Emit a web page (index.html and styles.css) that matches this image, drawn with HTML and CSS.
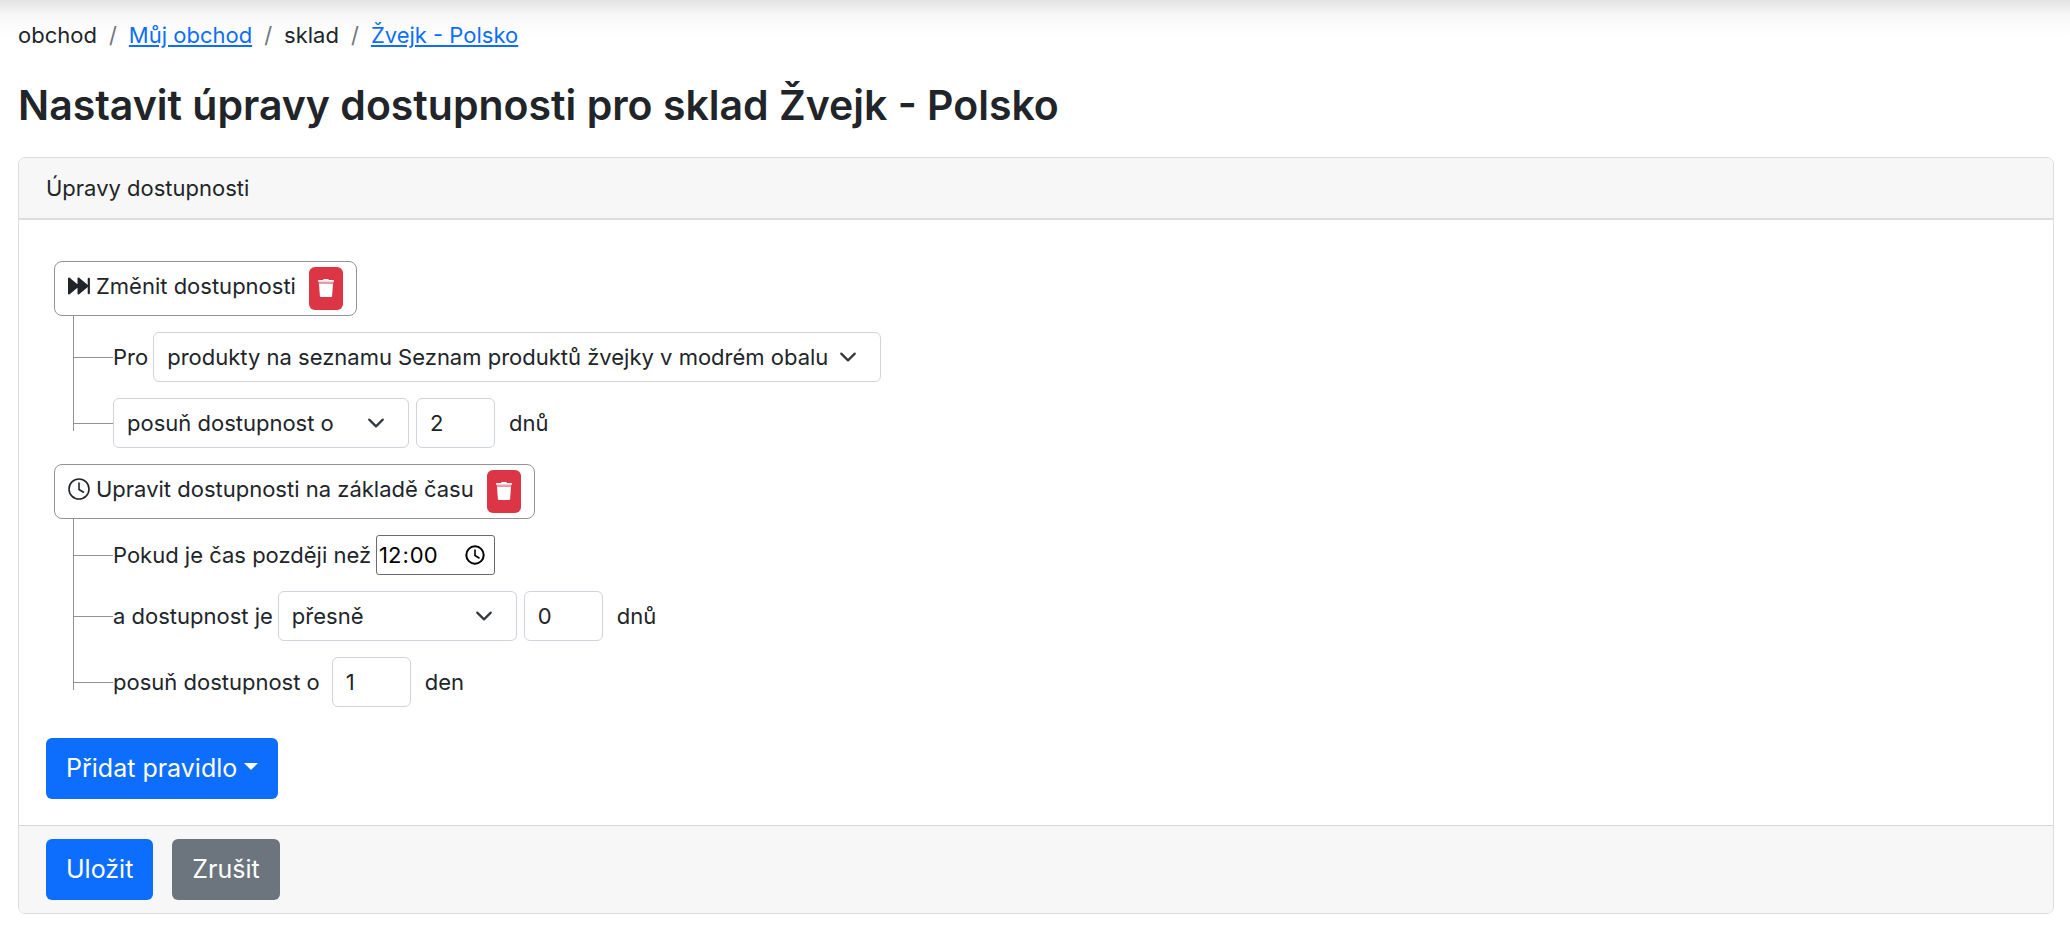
FILE: index.html
```html
<!DOCTYPE html>
<html lang="cs">
<head>
  <meta charset="utf-8">
  <meta name="viewport" content="width=device-width, initial-scale=1">
  <title>Nastavit úpravy dostupnosti</title>
  <link rel="stylesheet" href="styles.css">
</head>
<body>
  <main class="page">
    <nav>
      <ol class="breadcrumb">
        <li>obchod</li>
        <li><a href="#">Můj obchod</a></li>
        <li>sklad</li>
        <li><a href="#">Žvejk - Polsko</a></li>
      </ol>
    </nav>

    <h1>Nastavit úpravy dostupnosti pro sklad Žvejk - Polsko</h1>

    <form class="card">
      <div class="card-header">Úpravy dostupnosti</div>

      <div class="card-body">
        <div class="rules">
          <section class="rule">
            <div class="rule-title">
              <svg class="icon" viewBox="0 0 22 22" fill="currentColor" stroke="currentColor" stroke-linejoin="round">
                <path d="M1 3.500v15l9-7.500zM10.500 3.500v15l9-7.500z" stroke-width="2"/>
                <path d="M20.800 3.800v14.400" stroke-width="2.200" stroke-linecap="round"/>
              </svg>
              <span>Změnit dostupnosti</span>
              <button type="button" class="btn-delete" aria-label="Smazat">
                <svg viewBox="0 0 16 18" fill="#fff">
                  <path d="M0 2.700V1.700Q0 1 .8 1H5Q5.300 0 6.200 0h3.600Q10.700 0 11 1h4.200Q16 1 16 1.700v1z"/>
                  <path d="M.8 2.700h14.400V5H.8z" opacity=".5"/>
                  <path d="M1 5h14l-.9 11.900Q14 18 12.900 18H3.100Q2 18 1.900 16.900z"/>
                </svg>
              </button>
            </div>
            <ul class="rule-rows">
              <li>
                <label for="products">Pro</label>
                <select id="products" class="select-list">
                  <option>produkty na seznamu Seznam produktů žvejky v modrém obalu</option>
                </select>
              </li>
              <li>
                <select class="select-shift" aria-label="Úprava">
                  <option>posuň dostupnost o</option>
                </select>
                <input type="text" id="shift" class="days" value="2">
                <label for="shift" class="unit">dnů</label>
              </li>
            </ul>
          </section>

          <section class="rule">
            <div class="rule-title">
              <svg class="icon" viewBox="0 0 22 22" fill="none" stroke="currentColor" stroke-width="1.600" stroke-linecap="round" stroke-linejoin="round">
                <circle cx="11" cy="11" r="10"/>
                <path d="M11 5v6.500l4.500 2.700"/>
              </svg>
              <span>Upravit dostupnosti na základě času</span>
              <button type="button" class="btn-delete" aria-label="Smazat">
                <svg viewBox="0 0 16 18" fill="#fff">
                  <path d="M0 2.700V1.700Q0 1 .8 1H5Q5.300 0 6.200 0h3.600Q10.700 0 11 1h4.200Q16 1 16 1.700v1z"/>
                  <path d="M.8 2.700h14.400V5H.8z" opacity=".5"/>
                  <path d="M1 5h14l-.9 11.900Q14 18 12.900 18H3.100Q2 18 1.900 16.900z"/>
                </svg>
              </button>
            </div>
            <ul class="rule-rows">
              <li>
                <label for="time">Pokud je čas později než</label>
                <input type="time" id="time" value="12:00">
              </li>
              <li>
                <label for="compare">a dostupnost je</label>
                <select id="compare" class="select-compare">
                  <option>přesně</option>
                </select>
                <input type="text" id="days" class="days" value="0">
                <label for="days" class="unit">dnů</label>
              </li>
              <li>
                <label for="move" class="before-days">posuň dostupnost o</label>
                <input type="text" id="move" class="days" value="1">
                <label for="move" class="unit">den</label>
              </li>
            </ul>
          </section>
        </div>

        <button type="button" class="btn btn-primary dropdown">Přidat pravidlo</button>
      </div>

      <div class="card-footer">
        <button type="submit" class="btn btn-primary">Uložit</button>
        <button type="button" class="btn btn-secondary">Zrušit</button>
      </div>
    </form>
  </main>
</body>
</html>
```

FILE: styles.css
```css
* {
  box-sizing: border-box;
}
body {
  margin: 0;
  font-family: Inter, "Liberation Sans", sans-serif;
  font-size: 22px;
  line-height: 34px;
  color: #212529;
  background: linear-gradient(#e3e3e3, #f6f6f6 14px, #fdfdfd 28px, #fff 40px) no-repeat #fff;
}
a {
  color: #0d6efd;
}
button, input, select {
  font: inherit;
  color: inherit;
}
.page {
  padding: 18px 16px 14px 18px;
}

.breadcrumb {
  display: flex;
  margin: 0 0 24px;
  padding: 0;
  list-style: none;
}
.breadcrumb li + li::before {
  content: "/";
  padding: 0 12px;
  color: #6c757d;
}
h1 {
  margin: 0 0 23px;
  font-size: 41px;
  font-weight: 600;
  line-height: 58px;
}

.card {
  border: 1px solid #dcdcdd;
  border-radius: 7px;
  background: #fff;
}
.card-header {
  padding: 13px 27px;
  border-bottom: 2px solid #dcdcdc;
  border-radius: 6px 6px 0 0;
  background: #f7f7f7;
}
.card-body {
  padding: 41px 27px 26px;
}
.card-footer {
  display: flex;
  gap: 19px;
  padding: 13px 27px;
  border-top: 1px solid #d5d5d5;
  border-radius: 0 0 6px 6px;
  background: #f7f7f7;
}

/* rules */
.rules {
  display: flex;
  flex-direction: column;
  gap: 16px;
  padding-left: 8px;
  margin-bottom: 31px;
}
.rule-title {
  display: flex;
  width: fit-content;
  padding: 5px 13px;
  border: 1px solid #919496;
  border-radius: 8px;
  line-height: 38px;
}
.icon {
  width: 22px;
  height: 22px;
  margin: 8px 6px 0 0;
}
.btn-delete {
  display: flex;
  justify-content: center;
  width: 34px;
  height: 43px;
  margin-left: 13px;
  padding: 12px 0 0;
  border: 0;
  border-radius: 6px;
  background: #dc3545;
}
.btn-delete svg {
  width: 16px;
  height: 18px;
}
.rule-rows {
  display: flex;
  flex-direction: column;
  gap: 16px;
  margin: 0 0 0 19px;
  padding: 16px 0 0;
  list-style: none;
  /* trunk of the tree, ends just below the last branch */
  background: linear-gradient(#919496, #919496) no-repeat 0 0 / 1px calc(100% - 17px);
}
.rule-rows li {
  display: flex;
  align-items: center;
}
.rule-rows li::before {
  content: "";
  width: 40px;
  height: 1px;
  background: #919496;
}

/* fields */
select, .days {
  height: 50px;
  padding: 0 13px;
  border: 1px solid #ced4da;
  border-radius: 6px;
  background-color: #fff;
}
select {
  appearance: none;
  background-image: url("data:image/svg+xml,%3Csvg xmlns='http://www.w3.org/2000/svg' viewBox='0 0 16 16'%3E%3Cpath fill='none' stroke='%23343a40' stroke-linecap='round' stroke-linejoin='round' stroke-width='2' d='m2 5 6 6 6-6'/%3E%3C/svg%3E");
  background-repeat: no-repeat;
  background-position: right 22px center;
  background-size: 20px 18px;
}
label + select, label + input[type="time"] {
  margin-left: 5px;
}
.select-list {
  width: 728px;
}
.select-shift {
  width: 296px;
}
.select-compare {
  width: 239px;
}
.days {
  width: 79px;
}
select + .days {
  margin-left: 7px;
}
.before-days {
  margin-right: 12px;
}
.unit {
  margin-left: 14px;
}
input[type="time"] {
  width: 119px;
  height: 40px;
  padding: 0 9px 0 1px;
  border: 1px solid #6b6b6b;
  border-radius: 3px;
  background: #fff;
  color: #000;
}
input[type="time"]::-webkit-datetime-edit-ampm-field {
  display: none;
}
input[type="time"]::-webkit-calendar-picker-indicator {
  width: 20px;
  height: 20px;
  margin: 0;
  padding: 0;
  background: url("data:image/svg+xml,%3Csvg xmlns='http://www.w3.org/2000/svg' viewBox='0 0 20 20' fill='none' stroke='%23000' stroke-width='2'%3E%3Ccircle cx='10' cy='10' r='8.700'/%3E%3Cpath stroke-width='1.600' d='M10 4.500v6l4.500 2.700'/%3E%3C/svg%3E") no-repeat center / 20px;
}

/* buttons */
.btn {
  padding: 13px 20px;
  border: 0;
  border-radius: 6px;
  font-size: 25px;
  line-height: 35px;
  color: #fff;
}
.btn-primary {
  background: #0d6efd;
}
.btn-secondary {
  background: #6c757d;
}
.dropdown::after {
  content: "";
  display: inline-block;
  margin-left: 7px;
  border: 7px solid transparent;
  border-top-color: #fff;
  border-bottom: 0;
  vertical-align: 7px;
}
```
